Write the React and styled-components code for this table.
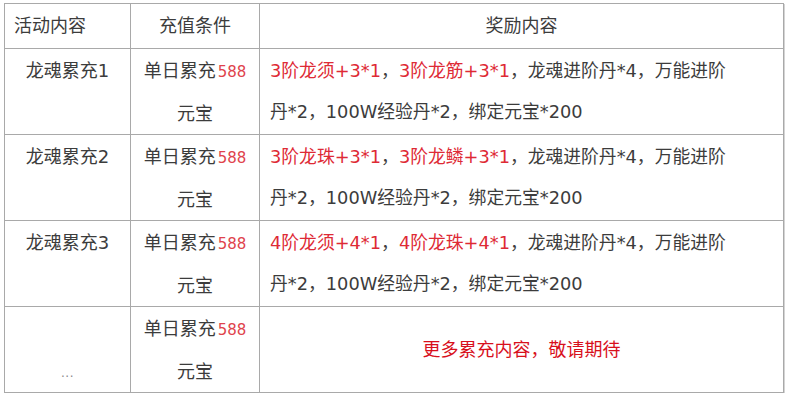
import React from "react";
import styled, { createGlobalStyle } from "styled-components";

const Global = createGlobalStyle`
  html, body { margin: 0; padding: 0; background: #ffffff; }
  body { font-family: "DejaVu Sans", "Noto Sans CJK SC", sans-serif; }
`;

const Page = styled.div`
  padding: 3px 0 0 4px;
`;

const Table = styled.div`
  display: grid;
  grid-template-columns: 125px 128px 523px;
  gap: 1px;
  padding: 1px;
  width: max-content;
  background: #a9a9a9;
  box-shadow: 1px 1px 0 #d4d4d4;
  color: #3c3c3c;
  font-size: 18px;
`;

const HeadCell = styled.div`
  background: #fff;
  height: 44px;
  line-height: 44px;
  padding: 0 ${(p) => (p.$align === "left" ? "9px" : "0")};
  text-align: ${(p) => p.$align || "center"};
  white-space: nowrap;
`;

const Cell = styled.div`
  background: #fff;
  height: 85px;
  box-sizing: border-box;
  padding: 1px ${(p) => (p.$align === "left" ? "10px" : "0")} 2px;
  line-height: 41px;
  text-align: ${(p) => p.$align || "center"};
  display: flex;
  flex-direction: column;
  justify-content: ${(p) =>
    p.$valign === "bottom" ? "flex-end" : p.$valign === "middle" ? "center" : "flex-start"};
  white-space: nowrap;
`;

const Reward = styled.div`
  font-size: 17.8px;
`;

const Red = styled.span`
  color: #de2a35;
`;

const Amount = styled.span`
  color: #e0434c;
  font-size: 15px;
  margin-left: 2px;
`;

const Notice = styled.span`
  color: #d8101c;
`;

const DotsLine = styled.div`
  line-height: 34px;
`;

const Dots = styled.span`
  color: #8a8a8a;
  font-size: 12px;
  letter-spacing: 0.5px;
`;

const rows = [
  { name: "龙魂累充1", a: "3阶龙须+3*1", b: "3阶龙筋+3*1" },
  { name: "龙魂累充2", a: "3阶龙珠+3*1", b: "3阶龙鳞+3*1" },
  { name: "龙魂累充3", a: "4阶龙须+4*1", b: "4阶龙珠+4*1" },
];

const Condition = () => (
  <Cell>
    <div>
      单日累充<Amount>588</Amount>
    </div>
    <div>元宝</div>
  </Cell>
);

export default function App() {
  return (
    <>
      <Global />
      <Page>
        <Table>
          <HeadCell $align="left">活动内容</HeadCell>
          <HeadCell>充值条件</HeadCell>
          <HeadCell>奖励内容</HeadCell>
          {rows.map((r) => (
            <React.Fragment key={r.name}>
              <Cell>
                <div>{r.name}</div>
              </Cell>
              <Condition />
              <Cell $align="left">
                <Reward>
                  <Red>{r.a}</Red>，<Red>{r.b}</Red>，龙魂进阶丹*4，万能进阶
                </Reward>
                <Reward>丹*2，100W经验丹*2，绑定元宝*200</Reward>
              </Cell>
            </React.Fragment>
          ))}
          <Cell $valign="bottom">
            <DotsLine>
              <Dots>...</Dots>
            </DotsLine>
          </Cell>
          <Condition />
          <Cell $valign="middle">
            <div>
              <Notice>更多累充内容，敬请期待</Notice>
            </div>
          </Cell>
        </Table>
      </Page>
    </>
  );
}
